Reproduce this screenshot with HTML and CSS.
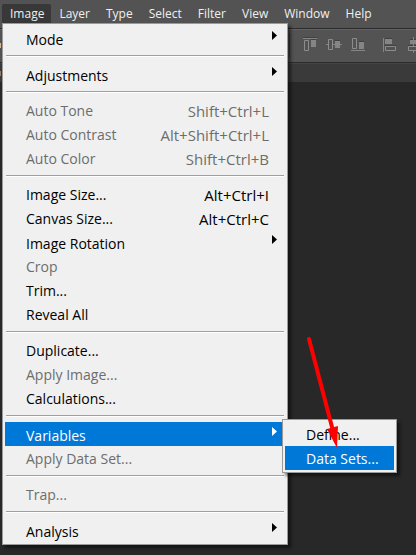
FILE: index.html
```html
<!DOCTYPE html>
<html lang="en">
<head>
<meta charset="utf-8">
<title>Image menu</title>
<link rel="stylesheet" href="styles.css">
</head>
<body>
<div class="app">
  <nav class="menubar" aria-label="Main menu">
    <button class="tab open">Image</button>
    <button class="tab">Layer</button>
    <button class="tab">Type</button>
    <button class="tab">Select</button>
    <button class="tab">Filter</button>
    <button class="tab">View</button>
    <button class="tab">Window</button>
    <button class="tab">Help</button>
  </nav>
  <div class="options">
    <i class="sliver"></i>
    <svg class="align-icons" width="130" height="30" viewBox="-6 -4 130 30" aria-label="Align" fill="none">
      <path fill="#3c3c3c" d="M-3 -2h1v25h-1z"/>
      <g fill="#404040">
        <path d="M11 2h14v1H11zM19 4h5v1h-5zM43 5h5v1h-5zM67 6h5v1h-5zM93 3h7v1h-7zM93 10h11v1h-11zM116 10h12v1h-12zM118 4h8v1h-8z"/>
      </g>
      <g fill="#858585">
        <path d="M11 3h14v1H11zM19 5h5v7h-5zM34 9h2v1h-2zM41 9h9v1h-9zM43 6h5v7h-5zM59 15h14v1H59zM67 7h5v7h-5zM91 3h1v14h-1zM93 4h7v5h-7z"/>
      </g>
      <g stroke="#8c8c8c">
        <path d="M12.500 5.500h4v10h-4zM36.500 4.500h4v10h-4zM60.500 3.500h4v10h-4zM93.500 11.500h10v4h-10zM116.500 11.500h11v4h-11z"/>
      </g>
      <path fill="#858585" d="M118 5h8v4h-8zM121 2h1v9h-1zM121 16h1v2h-1z"/>
    </svg>
  </div>
  <div class="tabstrip"><i class="sliver"></i></div>
  <main class="canvas"></main>
</div>

<div class="menu main-menu" role="menu">
  <button class="item sub"><span>Mode</span><i class="arrow"></i></button>
  <hr>
  <button class="item sub"><span>Adjustments</span><i class="arrow"></i></button>
  <hr>
  <button class="item" disabled><span>Auto Tone</span><kbd>Shift+Ctrl+L</kbd></button>
  <button class="item" disabled><span>Auto Contrast</span><kbd>Alt+Shift+Ctrl+L</kbd></button>
  <button class="item" disabled><span>Auto Color</span><kbd>Shift+Ctrl+B</kbd></button>
  <hr>
  <button class="item"><span>Image Size...</span><kbd>Alt+Ctrl+I</kbd></button>
  <button class="item"><span>Canvas Size...</span><kbd>Alt+Ctrl+C</kbd></button>
  <button class="item sub"><span>Image Rotation</span><i class="arrow"></i></button>
  <button class="item" disabled><span>Crop</span></button>
  <button class="item"><span>Trim...</span></button>
  <button class="item"><span>Reveal All</span></button>
  <hr>
  <button class="item"><span>Duplicate...</span></button>
  <button class="item" disabled><span>Apply Image...</span></button>
  <button class="item"><span>Calculations...</span></button>
  <hr>
  <button class="item sub active"><span>Variables</span><i class="arrow"></i></button>
  <button class="item" disabled><span>Apply Data Set...</span></button>
  <hr>
  <button class="item" disabled><span>Trap...</span></button>
  <hr>
  <button class="item sub"><span>Analysis</span><i class="arrow"></i></button>
</div>

<div class="menu submenu" role="menu">
  <button class="item"><span>Define...</span></button>
  <button class="item active"><span>Data Sets...</span></button>
</div>

<svg class="pointer" width="40" height="116" viewBox="0 0 40 116" aria-hidden="true">
  <path d="M6 6L29 94" stroke="#f00" stroke-width="4" stroke-linecap="round"/>
  <path d="M24 96L35 93L34 115Z" fill="#f00"/>
</svg>
</body>
</html>
```
FILE: styles.css
```css
* { box-sizing: border-box; }

body {
  margin: 0;
  background: #282828;
  font-family: "Open Sans", "Noto Sans", sans-serif;
  overflow: hidden;
}

button {
  border: 0;
  margin: 0;
  background: none;
  font-family: inherit;
  text-align: left;
}

.app {
  display: flex;
  flex-direction: column;
  min-height: 100vh;
}

.menubar {
  display: flex;
  height: 28px;
  padding: 4px 2px;
  background: #535353;
}

.tab {
  padding: 0 8px;
  height: 20px;
  color: #f0f0f0;
  font-size: 12px;
  line-height: 20px;
  white-space: nowrap;
}

.tab.open {
  padding-right: 7px;
  background: #383838;
  border-radius: 2px 2px 0 0;
}

.options {
  display: flex;
  justify-content: space-between;
  height: 35px;
  padding-top: 2px;
  background: #535353;
  border-top: 1px solid #2c2c2c;
  border-bottom: 1px solid #2c2c2c;
  box-shadow: inset 0 1px #636363;
}

.align-icons { flex: none; }

.sliver {
  width: 1px;
  height: 5px;
  margin-top: 12px;
  background: #d9b48a;
}

.tabstrip {
  display: flex;
  height: 19px;
  background: #3a3a3a;
  border-top: 1px solid #444;
}

.tabstrip .sliver {
  margin-top: 7px;
  background: #a07a5c;
}

.canvas {
  flex: 1;
  background: #282828;
}

.menu {
  position: absolute;
  padding: 2px;
  background: #f0f0f0;
  border: 1px solid #9a9a9a;
  box-shadow: 3px 3px 3px rgba(0, 0, 0, 0.5);
}

.main-menu {
  top: 23px;
  left: 2px;
  width: 286px;
}

.submenu {
  top: 419px;
  left: 282px;
  width: 115px;
}

.item {
  display: flex;
  justify-content: space-between;
  width: 100%;
  height: 24px;
  padding: 0 16px 0 21px;
  color: #000;
  font-size: 14px;
  line-height: 26px;
  white-space: nowrap;
}

.item:disabled { color: #6d6d6d; }

.item.active {
  background: #0078d7;
  color: #fff;
}

.item kbd {
  font-family: inherit;
  font-size: 15px;
}

.item.sub {
  padding-right: 8px;
  line-height: 28px;
}

.arrow {
  width: 5px;
  height: 9px;
  margin-top: 5px;
  background: currentColor;
  clip-path: polygon(0 0, 100% 50%, 0 100%);
}

hr {
  height: 2px;
  margin: 5px 1px;
  border: 0;
  border-top: 1px solid #a0a0a0;
  background: #fff;
}

.pointer {
  position: absolute;
  top: 333px;
  left: 303px;
}
```
